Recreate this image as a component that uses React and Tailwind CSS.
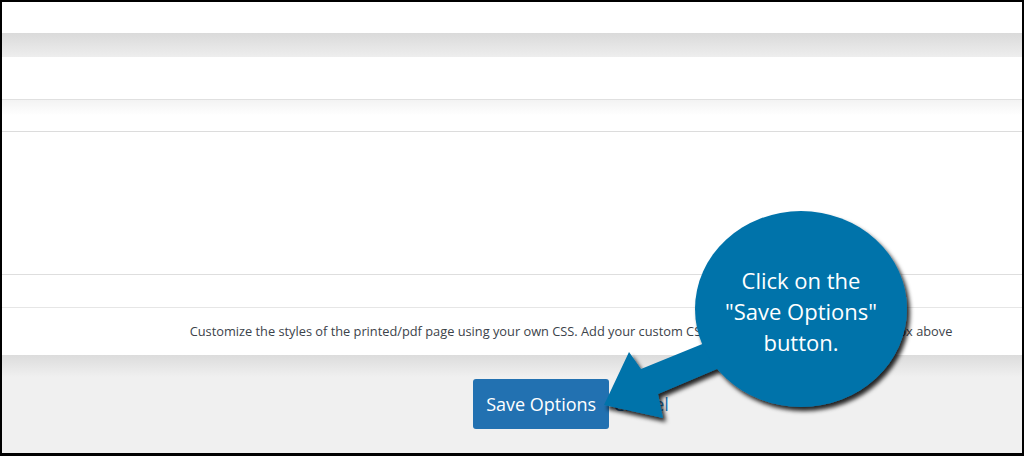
import React from 'react';

function Callout() {
  // speech bubble + arrow pointing at the save button
  return (
    <div className="absolute left-0 top-0 w-[1024px] h-[456px] pointer-events-none">
      <svg width="1024" height="456" className="absolute left-0 top-0">
        <defs>
          <filter id="shade" x="-20%" y="-20%" width="140%" height="140%">
            <feDropShadow dx="3" dy="4" stdDeviation="2" floodColor="#000" floodOpacity="0.85" />
          </filter>
        </defs>
        <g filter="url(#shade)" fill="#0073aa">
          <polygon points="604,405 629,352 641,369 722,336 724,366 658,394 663,418" />
          <ellipse cx="801" cy="309" rx="106" ry="98" />
        </g>
      </svg>
      <div className="absolute left-[691px] top-[265px] w-[220px] text-center text-white text-[22px] leading-[31px]">
        <div>Click on the</div>
        <div>"Save Options"</div>
        <div>button.</div>
      </div>
    </div>
  );
}

export default function App() {
  return (
    <div
      className="relative w-[1024px] h-[456px] bg-black pt-[2px] pl-[2px] pr-[2px] pb-[3px]"
      style={{ fontFamily: '"Open Sans", "Noto Sans", sans-serif' }}
    >
      <div className="flex flex-col h-full bg-[#f0f0f0] overflow-hidden">
        <div className="h-[31px] bg-white" />
        <div className="h-[24px] bg-gradient-to-b from-[#dadada] to-[#eeeeee]" />

        <div className="bg-white">
          <div className="h-[43px] border-b border-[#e0e0e0]" />
          <div className="h-[32px] border-b border-[#dcdcdc] bg-gradient-to-b from-[#f3f3f3] via-white to-white" />
          <div className="h-[143px] border-b border-[#dedede]" />
          <div className="h-[33px] border-b border-[#e6e6e6]" />
          <div className="h-[47px] flex items-center justify-center pl-[118px]">
            <p className="text-[12.8px] text-[#3c434a] whitespace-nowrap">
              Customize the styles of the printed/pdf page using your own CSS. Add your custom CSS (without style tags) in the text box above
            </p>
          </div>
        </div>

        <div className="flex-1 bg-gradient-to-b from-[#dcdcdc] to-[#f0f0f0] to-[22px] bg-no-repeat">
          <div className="flex items-center justify-center pl-[118px] pt-[24px]">
            <button className="h-[50px] px-[13px] rounded-[3px] bg-[#2271b1] text-white text-[18px]">
              Save Options
            </button>
            <a className="ml-[4px] text-[18px] text-[#2271b1]">Cancel</a>
          </div>
        </div>
      </div>
      <Callout />
    </div>
  );
}
